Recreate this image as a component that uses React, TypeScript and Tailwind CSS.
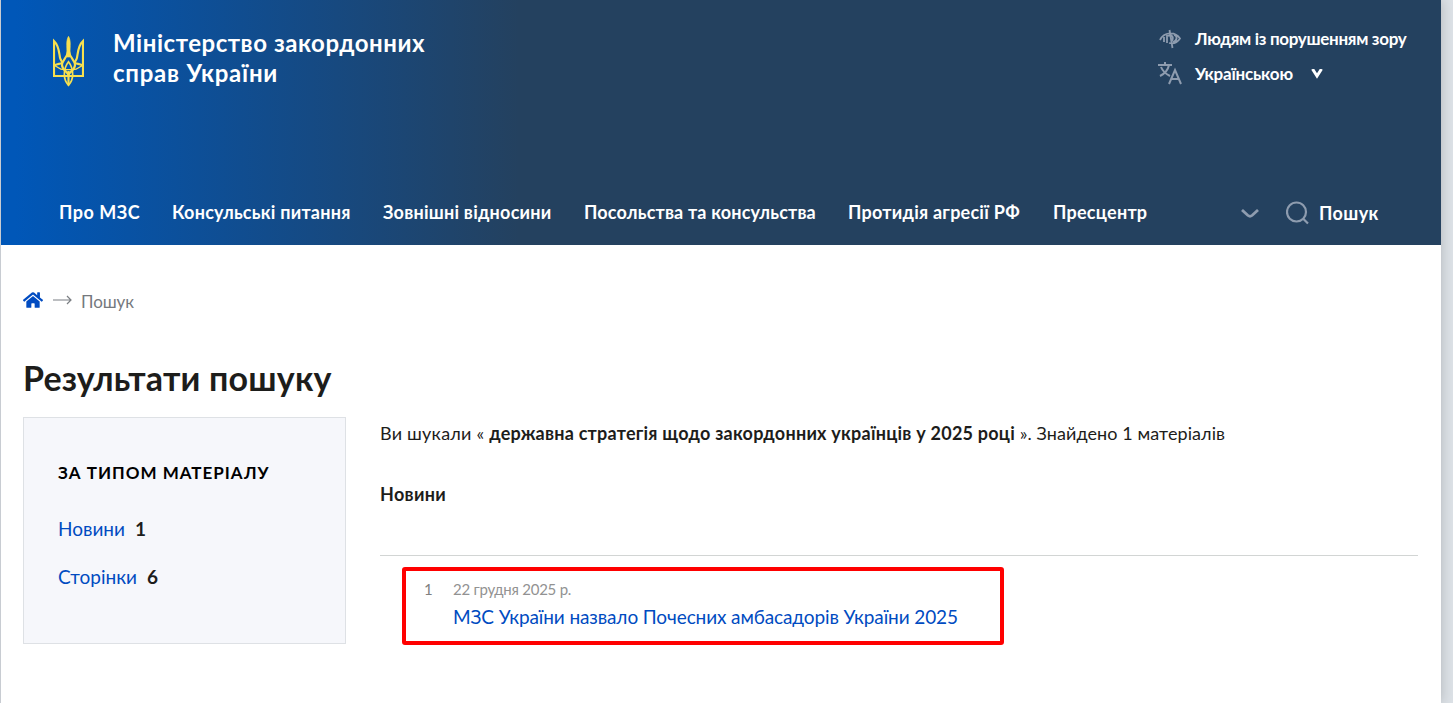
import { FaHome } from "react-icons/fa";

const navItems = [
  { label: "Про МЗС", style: "w-[81px] tracking-[0.5px]" },
  { label: "Консульські питання", style: "w-[179px] tracking-[0.24px]" },
  { label: "Зовнішні відносини", style: "w-[169px] tracking-[0.24px]" },
  { label: "Посольства та консульства", style: "w-[232px] tracking-[0.17px]" },
  { label: "Протидія агресії РФ", style: "w-[173px] tracking-[0.24px]" },
  { label: "Пресцентр", style: "w-[95px] tracking-[0.25px]" },
];

const materialTypes = [
  { label: "Новини", count: 1, style: "w-[67px]" },
  { label: "Сторінки", count: 6, style: "w-[79px]" },
];

function Trident() {
  return (
    <svg
      viewBox="39 33 93 153"
      className="mt-[36px] h-[51px] w-[31px] shrink-0"
      fill="none"
      stroke="#f7e04f"
      strokeWidth="6.500"
    >
      <path d="M74 153H42V48C57 62 57 82 60 98C61 105 67 108 66 113C64 118 48 115 44 122" />
      <path d="M97 153H129V48C114 62 114 82 111 98C110 105 104 108 105 113C107 118 123 115 127 122" />
      <path d="M43 122C52 123 56 134 72 134H99C115 134 119 123 128 122" strokeWidth="4" />
      <path d="M84 80C82 98 66 106 66 120C66 135 83 140 85.500 150C88 140 105 135 105 120C105 106 89 98 87 80" />
      <path d="M85.500 34C76 50 83 70 80 96H91C88 70 95 50 85.500 34Z" fill="#f7e04f" strokeWidth="2" />
      <path d="M85.500 110C76 122 73 134 73 148C73 164 78 173 85.500 181C93 173 98 164 98 148C98 134 95 122 85.500 110Z" strokeWidth="5" />
      <path d="M85.500 138V180M73 153H98" />
    </svg>
  );
}

function EyeIcon() {
  return (
    <svg viewBox="0 0 22 20" className="h-5 w-[22px]" fill="none" stroke="#8e9caf" strokeWidth="1.800">
      <path d="M1 11C5 3 16 2 21 9.500C18 14 14 15 10 14M5 8V13M8 6V14M10.500 1L13.500 19M9 7C13 5 15 8 13 12M15 6C19 7 18 12 14 13" />
    </svg>
  );
}

function LanguageIcon() {
  return (
    <svg viewBox="0 0 24 23" className="ml-px h-[23px] w-6" fill="none" stroke="#8e9caf" strokeWidth="2">
      <path d="M0 3H14M7 0V3M11 3C10 8 6 12 2 14M3 5C5 10 8 12 12 14M11 22L17 8L23 22M13 17H21" />
    </svg>
  );
}

function Header() {
  return (
    <header className="flex h-[245px] flex-col bg-[linear-gradient(90deg,#0057b8_1%,#24415f_36%)] text-white">
      <div className="flex h-[189px] justify-between pl-[52px]">
        <div className="flex gap-[29px]">
          <Trident />
          <p className="pt-[28px] text-[24px] leading-[30px] font-bold">
            <span className="block w-[313px] tracking-[0.54px] whitespace-nowrap">Міністерство закордонних</span>
            <span className="block w-[165px] tracking-[0.75px] whitespace-nowrap">справ України</span>
          </p>
        </div>
        <div className="w-[284px] pt-[29px] text-[17px] leading-5 font-bold">
          <div className="flex items-center gap-[14px] pl-0.5">
            <EyeIcon />
            <span className="tracking-[-0.31px] whitespace-nowrap">Людям із порушенням зору</span>
          </div>
          <div className="mt-[13px] flex items-center">
            <LanguageIcon />
            <span className="ml-[13px] w-[98px] tracking-[-0.2px] whitespace-nowrap">Українською</span>
            <svg viewBox="0 0 12 10" className="ml-[18px] h-2.5 w-3" fill="none" stroke="white" strokeWidth="3">
              <path d="M1.500 0L6 7L10.500 0" />
            </svg>
          </div>
        </div>
      </div>
      <div className="flex h-[46px] items-center pl-[58px] text-[18px] font-bold">
        <nav className="flex gap-8">
          {navItems.map((item) => (
            <a key={item.label} className={`${item.style} whitespace-nowrap`}>
              {item.label}
            </a>
          ))}
        </nav>
        <svg viewBox="0 0 18 10" className="mt-1 ml-[93px] h-2.5 w-[18px]" fill="none" stroke="#8e9caf" strokeWidth="2.800">
          <path d="M1 1L7 6.500Q9 8 11 6.500L17 1" />
        </svg>
        <svg viewBox="0 0 23 24" className="mt-0.5 ml-[27px] h-6 w-[23px]" fill="none" stroke="#8e9caf" strokeWidth="2.200">
          <circle cx="10.500" cy="11" r="9.500" />
          <path d="M17 17.500L22 22.500" />
        </svg>
        <span className="mt-0.5 ml-[10px] tracking-[0.4px]">Пошук</span>
      </div>
    </header>
  );
}

function Sidebar() {
  return (
    <aside className="h-[227px] w-[323px] shrink-0 border border-[#dee1e5] bg-[#f6f7fb] pl-[34px]">
      <h2 className="pt-[43px] text-[17px] leading-6 font-bold tracking-[1px] whitespace-nowrap text-black">
        ЗА ТИПОМ МАТЕРІАЛУ
      </h2>
      <ul className="mt-8 flex flex-col gap-6 text-[19px] leading-6">
        {materialTypes.map((type) => (
          <li key={type.label} className="flex gap-[10px]">
            <a className={`${type.style} whitespace-nowrap text-[#004bc1]`}>{type.label}</a>
            <span className="font-bold">{type.count}</span>
          </li>
        ))}
      </ul>
    </aside>
  );
}

function Results() {
  return (
    <section className="w-[1038px] pt-1">
      <p className="text-[18px] leading-6 tracking-[0.22px] whitespace-nowrap">
        Ви шукали «{" "}
        <b className="font-bold tracking-[0.23px]">державна стратегія щодо закордонних українців у 2025 році</b>
        <span className="tracking-[0.08px]"> ». Знайдено 1 матеріалів</span>
      </p>
      <h3 className="mt-[37px] text-[18px] leading-6 font-bold tracking-[0.3px]">Новини</h3>
      <hr className="mt-[49px] border-[#d2d5d4]" />
      <div className="mt-[11px] ml-[22px] flex h-[78px] w-[602px] rounded-[3px] border-4 border-[#ff0000] pt-[6px] pl-[18px]">
        <span className="w-[29px] text-[15px] leading-6 text-[#808080]">1</span>
        <div>
          <p className="text-[15px] leading-6 tracking-[-0.24px] whitespace-nowrap text-[#929292]">22 грудня 2025 р.</p>
          <a className="mt-px block text-[19px] leading-[30px] tracking-[-0.11px] whitespace-nowrap text-[#004bc1]">
            МЗС України назвало Почесних амбасадорів України 2025
          </a>
        </div>
      </div>
    </section>
  );
}

export default function App() {
  return (
    <div className="h-[703px] w-[1453px] overflow-hidden bg-[#dce1e6] font-['Lato','Open_Sans',sans-serif] text-[#1d1d1b]">
      <div className="h-full w-[1441px] border-l border-[#c8ccd2] bg-white shadow-[0_0_12px_rgba(0,0,0,0.2)]">
        <Header />
        <main className="pl-[22px]">
          <div className="mt-[44px] flex h-6 items-center text-[17px] text-[#75797e]">
            <FaHome size={20} className="-mt-0.5 text-[#004bc1]" />
            <svg viewBox="0 0 19 10" className="-mt-0.5 ml-2.5 h-2.5 w-[19px]" fill="none" stroke="#7b7f83" strokeWidth="1.200">
              <path d="M0 5H18M14 1L18 5L14 9" />
            </svg>
            <span className="mt-px ml-[9px] tracking-[-0.1px]">Пошук</span>
          </div>
          <h1 className="mt-[43px] h-[61px] text-[34px] leading-[44px] font-bold tracking-[0.2px] whitespace-nowrap">
            Результати пошуку
          </h1>
          <div className="flex gap-[34px]">
            <Sidebar />
            <Results />
          </div>
        </main>
      </div>
    </div>
  );
}
